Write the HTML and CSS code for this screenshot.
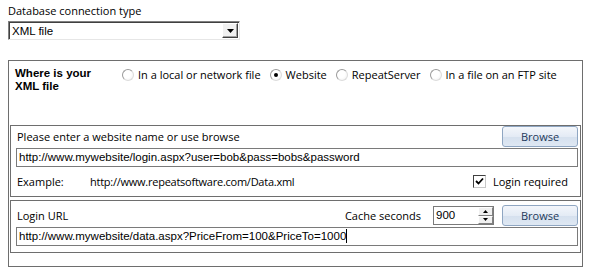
FILE: index.html
```html
<!DOCTYPE html>
<html lang="en">
<head>
  <meta charset="UTF-8" />
  <title>Database connection</title>
  <link rel="stylesheet" href="styles.css">
</head>
<body>
  <div class="page">
    <div class="field-label">Database connection type</div>
    <div class="combo">
      <span class="combo-text">XML file</span>
      <span class="combo-btn">
        <svg width="7" height="4" viewBox="0 0 7 4"><path d="M0 0H7L3.5 4Z" fill="#000"/></svg>
      </span>
    </div>

    <!-- Source of the XML file -->
    <div class="group">
      <div class="group-head">
        <div class="group-title">Where is your<br>XML file</div>
        <div class="radios">
          <label class="radio"><span class="radio-dot"></span>In a local or network file</label>
          <label class="radio"><span class="radio-dot checked"></span>Website</label>
          <label class="radio"><span class="radio-dot"></span>RepeatServer</label>
          <label class="radio"><span class="radio-dot"></span>In a file on an FTP site</label>
        </div>
      </div>

      <div class="panel panel-site">
        <div class="row row-top">
          <span class="label">Please enter a website name or use browse</span>
          <button class="btn">Browse</button>
        </div>
        <div class="textbox">http://www.mywebsite/login.aspx?user=bob&amp;pass=bobs&amp;password</div>
        <div class="row row-example">
          <span class="example-key">Example:</span>
          <span class="example-url">http://www.repeatsoftware.com/Data.xml</span>
          <span class="check">
            <span class="check-box">
              <svg width="9" height="9" viewBox="0 0 9 9"><path d="M1 4L3.5 6.5L8 1.5" fill="none" stroke="#000" stroke-width="1.8"/></svg>
            </span>
            Login required
          </span>
        </div>
      </div>

      <div class="panel panel-login">
        <div class="row row-login">
          <span class="label">Login URL</span>
          <span class="cache">Cache seconds</span>
          <span class="spin">
            <span class="spin-text">900</span>
            <span class="spin-btns">
              <span class="spin-btn"><svg width="5" height="3" viewBox="0 0 5 3"><path d="M0 3H5L2.5 0Z" fill="#000"/></svg></span>
              <span class="spin-btn"><svg width="5" height="3" viewBox="0 0 5 3"><path d="M0 0H5L2.5 3Z" fill="#000"/></svg></span>
            </span>
          </span>
          <button class="btn">Browse</button>
        </div>
        <div class="textbox">http://www.mywebsite/data.aspx?PriceFrom=100&amp;PriceTo=1000<span class="caret"></span></div>
      </div>
    </div>
  </div>
</body>
</html>
```

FILE: styles.css
```css
body {
  margin: 0;
  background: #fff;
  font-family: 'Open Sans', 'Noto Sans', sans-serif;
  font-size: 11px;
  color: #000;
}

.page {
  padding: 3px 6px 0 8px;
}

.field-label {
  line-height: 16px;
}

.combo {
  display: flex;
  align-items: center;
  width: 232px;
  height: 19px;
  margin-top: 2px;
  box-sizing: border-box;
  border: 1px solid;
  border-color: #808080 #e6e6e6 #e6e6e6 #808080;
  box-shadow: inset 1px 1px 0 #404040;
  background: #fff;
}

.combo-text {
  flex: 1;
  padding-left: 3px;
  font-family: 'Liberation Sans', Arial, sans-serif;
  font-size: 11.5px;
}

.combo-btn {
  display: flex;
  align-items: center;
  justify-content: center;
  width: 16px;
  height: 15px;
  margin-right: 1px;
  box-sizing: border-box;
  background: #f0f0f0;
  border: 1px solid;
  border-color: #fff #404040 #404040 #fff;
  box-shadow: inset -1px -1px 0 #a0a0a0;
}

.group {
  margin-top: 20px;
  width: 575px;
  box-sizing: border-box;
  border: 1px solid #6e6e6e;
  padding: 0 1px 13px 1px;
}

.group-head {
  display: flex;
  height: 64px;
  box-sizing: border-box;
  padding: 6px 0 0 5px;
}

.group-title {
  width: 107px;
  font-family: 'Liberation Sans', Arial, sans-serif;
  font-weight: bold;
  font-size: 11.5px;
  line-height: 13px;
}

.radios {
  display: flex;
  gap: 9px;
  height: 14px;
  margin-top: 1px;
}

.radio {
  display: flex;
  align-items: center;
  gap: 4px;
  line-height: 14px;
}

.radio-dot {
  width: 12px;
  height: 12px;
  box-sizing: border-box;
  border-radius: 50%;
  border: 1px solid #9a9a9a;
  border-right-color: #dcdcdc;
  border-bottom-color: #dcdcdc;
  background: radial-gradient(circle at 40% 40%, #fff 0%, #fff 45%, #ececec 100%);
  display: flex;
  align-items: center;
  justify-content: center;
}

.radio-dot.checked::after {
  content: "";
  width: 4px;
  height: 4px;
  border-radius: 50%;
  background: #000;
}

.panel {
  border: 1px solid #6e6e6e;
  padding: 0 2px 0 5px;
}

.panel-login {
  margin-top: 3px;
  padding-top: 4px;
  padding-bottom: 6px;
}

.row {
  display: flex;
  align-items: center;
}

.row-top {
  height: 21px;
  justify-content: space-between;
}

.label {
  padding-left: 1px;
}

.btn {
  width: 76px;
  height: 21px;
  padding: 0;
  font-family: 'Open Sans', 'Noto Sans', sans-serif;
  font-size: 11px;
  color: #1e395b;
  border: 1px solid #8fa6c2;
  border-radius: 3px;
  background: linear-gradient(#f3f6fb 0%, #e4ebf5 50%, #d5e0ee 51%, #dfe8f3 100%);
}

.textbox {
  height: 19px;
  margin-top: 1px;
  box-sizing: border-box;
  border: 1px solid #7a7a7a;
  padding-left: 2px;
  font-family: 'Liberation Sans', Arial, sans-serif;
  font-size: 11.5px;
  line-height: 17px;
  white-space: nowrap;
}

.caret {
  display: inline-block;
  width: 1px;
  height: 14px;
  background: #000;
  vertical-align: -3px;
}

.row-example {
  height: 29px;
}

.example-key {
  width: 74px;
  padding-left: 1px;
  box-sizing: border-box;
}

.example-url {
  letter-spacing: -0.25px;
}

.check {
  display: flex;
  align-items: center;
  gap: 7px;
  margin-left: auto;
  margin-right: 10px;
}

.check-box {
  display: flex;
  align-items: center;
  justify-content: center;
  width: 13px;
  height: 13px;
  box-sizing: border-box;
  border: 1px solid;
  border-color: #404040 #c8c8c8 #c8c8c8 #404040;
  background: #fff;
}

.row-login {
  height: 21px;
}

.cache {
  margin-left: auto;
  margin-right: 12px;
}

.spin {
  display: flex;
  width: 61px;
  height: 19px;
  margin-right: 8px;
  box-sizing: border-box;
  border: 1px solid #7a7a7a;
  background: #fff;
}

.spin-text {
  flex: 1;
  padding-left: 2px;
  font-family: 'Liberation Sans', Arial, sans-serif;
  font-size: 11.5px;
  line-height: 17px;
}

.spin-btns {
  display: flex;
  flex-direction: column;
  width: 15px;
}

.spin-btn {
  flex: 1;
  display: flex;
  align-items: center;
  justify-content: center;
  background: #f0f0f0;
  border: 1px solid;
  border-color: #fff #808080 #808080 #fff;
}
```
